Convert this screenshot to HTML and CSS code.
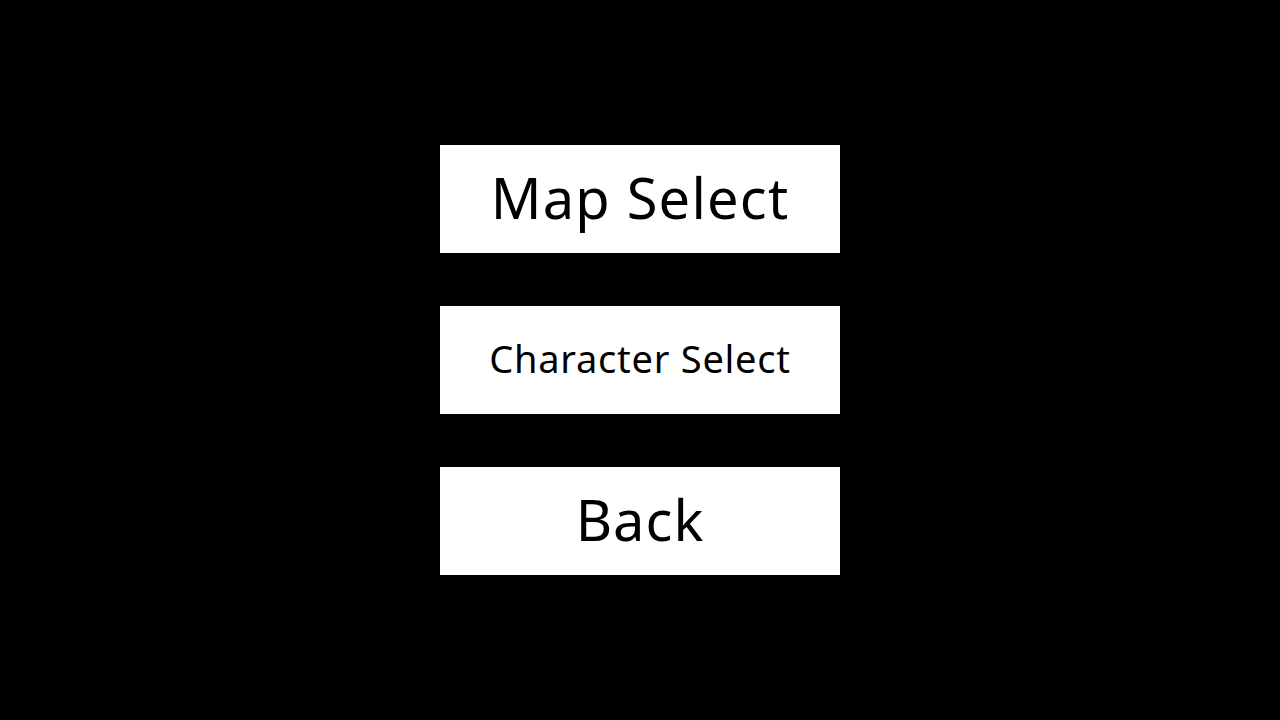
FILE: index.html
```html
<!DOCTYPE html>
<html>
<head>
<meta charset="utf-8">
<link rel="stylesheet" href="styles.css">
</head>
<body>
<main class="menu">
  <button class="btn btn-large btn-map">Map Select</button>
  <button class="btn btn-small">Character Select</button>
  <button class="btn btn-large btn-back">Back</button>
</main>
</body>
</html>
```
FILE: styles.css
```css
html, body {
  margin: 0;
  padding: 0;
  width: 1280px;
  height: 720px;
  background: #000;
  overflow: hidden;
}
.menu {
  height: 720px;
  display: flex;
  flex-direction: column;
  align-items: center;
  justify-content: center;
  gap: 53px;
}
.btn {
  width: 400px;
  height: 108px;
  background: #fff;
  border: none;
  margin: 0;
  padding: 0 0 4px 0;
  color: #000;
  font-family: "Noto Sans", sans-serif;
  display: flex;
  align-items: center;
  justify-content: center;
  line-height: 1;
}
.btn-large {
  font-size: 56px;
}
.btn-map {
  letter-spacing: 1.2px;
}
.btn-back {
  letter-spacing: 1px;
}
.btn-small {
  font-size: 38px;
  letter-spacing: 0.75px;
}
```
